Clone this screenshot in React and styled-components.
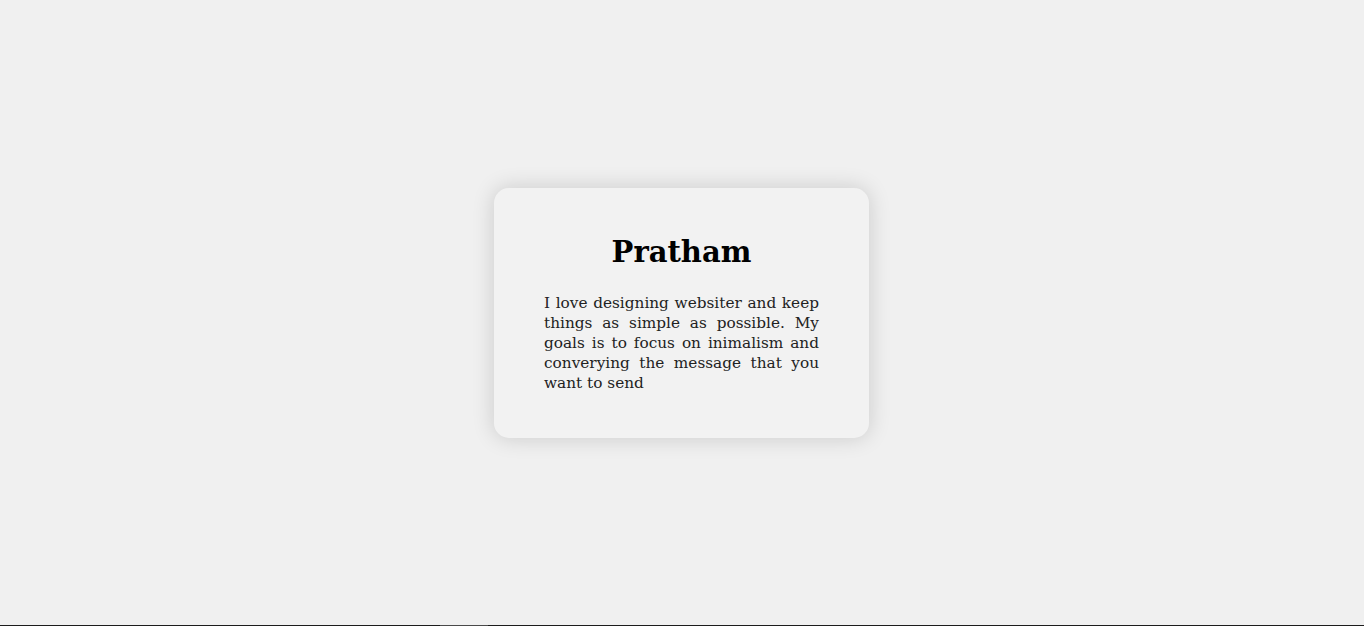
import React from "react";
import styled, { createGlobalStyle } from "styled-components";

const Global = createGlobalStyle`
  html, body { margin: 0; padding: 0; }
  body { background: #f0f0f0; font-family: "DejaVu Serif", "Liberation Serif", serif; }
`;

const Page = styled.div`
  height: 100vh;
  display: grid;
  grid-template-rows: 1fr 1px;
`;

const Center = styled.main`
  display: flex;
  align-items: center;
  justify-content: center;
  padding-right: 1px;
`;

const Card = styled.section`
  box-sizing: border-box;
  width: 375px;
  height: 250px;
  padding: 40px 50px;
  background: #f2f2f2;
  border-radius: 15px;
  box-shadow: 0 0 22px rgba(0, 0, 0, 0.16);
`;

const Title = styled.h2`
  margin: 0 0 17px;
  text-align: center;
  font-size: 29px;
  font-weight: 700;
  color: #000;
  line-height: 48px;
`;

const Text = styled.p`
  margin: 0;
  font-size: 15.3px;
  line-height: 20px;
  text-align: justify;
  color: #222;
`;

const BottomBar = styled.div`
  background: #1c1c1c;
  display: grid;
  grid-template-columns: 440px 48px 1fr;
`;

const Thumb = styled.div`
  grid-column: 2;
  background: #4a4a4a;
`;

export default function App() {
  return (
    <>
      <Global />
      <Page>
        <Center>
          <Card>
            <Title>Pratham</Title>
            <Text>
              I love designing websiter and keep things as simple as possible. My goals is to focus on
              inimalism and converying the message that you want to send
            </Text>
          </Card>
        </Center>
        <BottomBar>
          <Thumb />
        </BottomBar>
      </Page>
    </>
  );
}
